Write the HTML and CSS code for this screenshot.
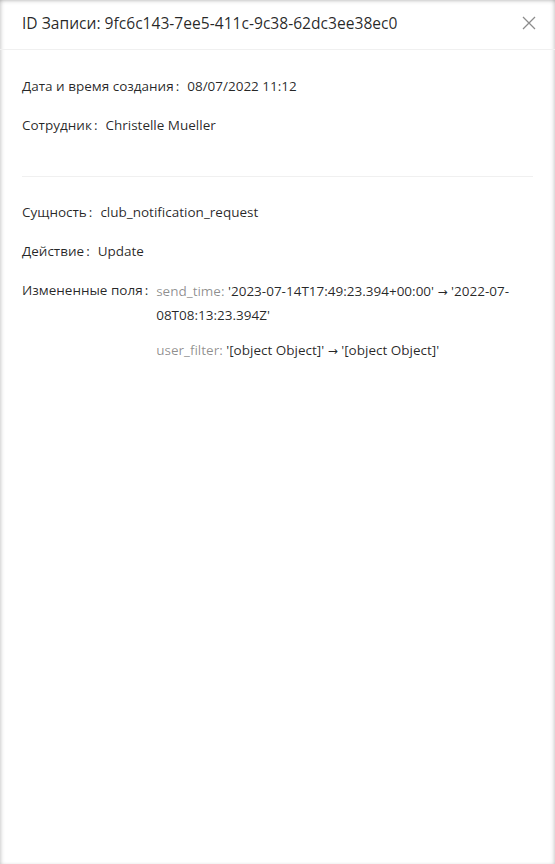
FILE: index.html
```html
<!DOCTYPE html>
<html lang="ru">
<head>
<meta charset="utf-8">
<link rel="stylesheet" href="styles.css">
</head>
<body>
<div class="drawer">
  <div class="header">
    <div class="title">ID Записи: 9fc6c143-7ee5-411c-9c38-62dc3ee38ec0</div>
    <button class="close" aria-label="Close">
      <svg width="14" height="14" viewBox="0 0 14 14"><path d="M1 1L13 13M13 1L1 13" stroke="currentColor" stroke-width="1.3" fill="none"/></svg>
    </button>
  </div>
  <div class="body">
    <div class="desc">
      <div class="row"><span class="label">Дата и время создания</span><span class="value">08/07/2022 11:12</span></div>
      <div class="row"><span class="label">Сотрудник</span><span class="value">Christelle Mueller</span></div>
    </div>
    <div class="divider"></div>
    <div class="desc">
      <div class="row"><span class="label">Сущность</span><span class="value">club_notification_request</span></div>
      <div class="row"><span class="label">Действие</span><span class="value">Update</span></div>
      <div class="row"><span class="label">Измененные поля</span>
        <div class="value fields">
          <div class="field"><span class="fname">send_time:</span> '2023-07-14T17:49:23.394+00:00' <span class="arrow">→</span> '2022-07-08T08:13:23.394Z'</div>
          <div class="field"><span class="fname">user_filter:</span> '[object Object]' <span class="arrow">→</span> '[object Object]'</div>
        </div>
      </div>
    </div>
  </div>
</div>
</body>
</html>
```
FILE: styles.css
```css
html, body {
  margin: 0;
  padding: 0;
  height: 100%;
}
body {
  font-family: "Open Sans", "Noto Sans", sans-serif;
  color: rgba(0, 0, 0, 0.85);
  background: #fff;
}
.drawer {
  height: 864px;
  box-sizing: border-box;
  background: #fff;
  box-shadow: inset 3px 0 4px -2px rgba(0,0,0,0.18), inset -3px 0 4px -2px rgba(0,0,0,0.18), inset 0 3px 4px -2px rgba(0,0,0,0.18);
}
.header {
  display: flex;
  align-items: center;
  justify-content: space-between;
  height: 49px;
  padding: 0 19px 0 22px;
  border-bottom: 1px solid #f0f0f0;
}
.title {
  font-size: 15.6px;
  line-height: 22px;
  color: rgba(0, 0, 0, 0.85);
  margin-top: -4px;
}
.close {
  border: 0;
  background: none;
  padding: 0;
  color: rgba(0, 0, 0, 0.45);
  display: flex;
  margin-top: -4px;
}
.body {
  padding: 25px 22px;
  font-size: 13.5px;
  line-height: 22px;
}
.row {
  display: flex;
  padding-bottom: 17px;
}
.label {
  flex: none;
  color: rgba(0, 0, 0, 0.85);
}
.label::after {
  content: ":";
  margin: 0 8px 0 2px;
}
.value {
  color: rgba(0, 0, 0, 0.85);
}
.fields {
  flex: 1;
  min-width: 0;
}
.field {
  margin-bottom: 11px;
  line-height: 24px;
}
.fname {
  color: rgba(0, 0, 0, 0.45);
}
.arrow {
  font-family: "DejaVu Sans", sans-serif;
  font-size: 12px;
  line-height: 1;
}
.divider {
  border-top: 1px solid #f0f0f0;
  margin: 23px 0 24px;
}
```
